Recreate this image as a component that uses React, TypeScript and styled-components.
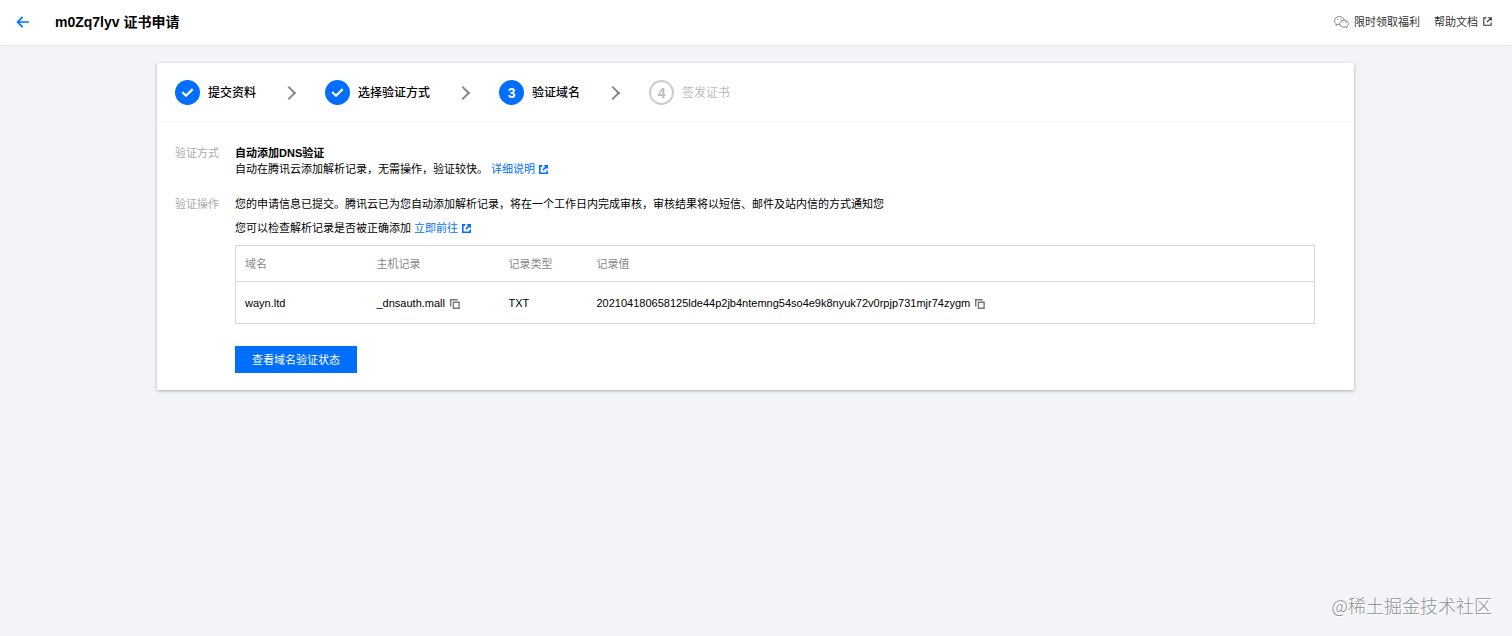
import React from 'react';
import styled, { createGlobalStyle } from 'styled-components';

const GlobalStyle = createGlobalStyle`
  * { box-sizing: border-box; }
  body {
    margin: 0;
    background: #f2f4f8;
    color: #000;
    font-family: "Liberation Sans", "Noto Sans CJK SC", sans-serif;
    font-size: 11px;
    line-height: 16px;
  }
  h1, h2, p { margin: 0; }
`;

const Page = styled.div`
  display: flex;
  flex-direction: column;
  min-height: 100vh;
`;

const Header = styled.header`
  display: flex;
  align-items: center;
  height: 45px;
  padding: 0 20px 2px 16px;
  background: #fff;
  box-shadow: 0 1px 2px rgba(30, 40, 60, 0.06);
`;

const IconButton = styled.button`
  display: inline-flex;
  padding: 0;
  border: 0;
  background: none;
  color: inherit;
  cursor: pointer;
`;

const BackButton = styled(IconButton)`
  color: #006eff;
`;

const Title = styled.h1`
  margin-left: 25px;
  font-size: 14px;
  line-height: 20px;
  font-weight: 700;
`;

const HeaderLinks = styled.nav`
  display: flex;
  gap: 14px;
  margin-left: auto;
`;

const HeaderLink = styled.a`
  display: flex;
  align-items: center;
  gap: 5px;
  color: #333;
  text-decoration: none;
`;

const Card = styled.main`
  margin: 18px 158px 0 157px;
  background: #fff;
  box-shadow: 0 1px 3px rgba(40, 50, 60, 0.35);
`;

const Steps = styled.ol`
  display: flex;
  align-items: center;
  margin: 0;
  padding: 17px 18px 16px;
  border-bottom: 2px solid #f9fafb;
  list-style: none;
`;

const Step = styled.li<{ $pending?: boolean }>`
  display: flex;
  align-items: center;
  gap: 8px;
  font-size: 12px;
  line-height: 18px;
  font-weight: ${(p) => (p.$pending ? 400 : 500)};
  color: ${(p) => (p.$pending ? '#bbb' : '#000')};

  &:not(:first-child)::before {
    content: '';
    width: 8px;
    height: 8px;
    margin: 0 23px 0 28px;
    border: solid #888;
    border-width: 2px 2px 0 0;
    transform: rotate(45deg);
  }
`;

const StepMark = styled.span<{ $pending?: boolean }>`
  display: flex;
  align-items: center;
  justify-content: center;
  width: 25px;
  height: 25px;
  border: 2px solid ${(p) => (p.$pending ? '#ccc' : '#006eff')};
  border-radius: 50%;
  background: ${(p) => (p.$pending ? '#fff' : '#006eff')};
  color: ${(p) => (p.$pending ? '#bbb' : '#fff')};
  font-size: 14px;
  font-weight: 700;
`;

const Body = styled.div`
  display: flex;
  flex-direction: column;
  gap: 19px;
  padding: 22px 39px 17px 18px;
`;

const Row = styled.section`
  display: grid;
  grid-template-columns: 60px minmax(0, 1fr);
`;

const RowLabel = styled.h2`
  font-size: 11px;
  line-height: 16px;
  font-weight: 400;
  color: #aaa;
`;

const Method = styled.p`
  font-weight: 700;
`;

const Check = styled.p`
  margin: 8px 0 9px;
`;

const TextLink = styled.a`
  color: #006eff;
  text-decoration: none;

  svg {
    margin-left: 4px;
    vertical-align: -1px;
  }
`;

const Table = styled.table`
  width: 100%;
  border: 1px solid #d5d7da;
  border-collapse: collapse;
  table-layout: fixed;
  text-align: left;
`;

const Col = styled.col<{ $width?: number }>`
  width: ${(p) => (p.$width ? `${p.$width}px` : 'auto')};
`;

const Th = styled.th`
  height: 36px;
  padding: 0 9px;
  border-bottom: 1px solid #d5d7da;
  font-weight: 400;
  color: #888;
`;

const Td = styled.td`
  height: 42px;
  padding: 0 9px;
`;

const Copyable = styled.span`
  display: flex;
  align-items: center;
  gap: 5px;
  color: #000;

  button {
    margin-top: 2px;
    color: #777;
  }
`;

const PrimaryButton = styled.button`
  height: 27px;
  margin-top: 22px;
  padding: 0 17px;
  border: 0;
  background: #006eff;
  color: #fff;
  font: inherit;
  cursor: pointer;
`;

const Watermark = styled.footer`
  margin-top: auto;
  padding: 0 20px 18px;
  color: #8f9296;
  font-family: "Noto Sans CJK SC", sans-serif;
  font-size: 18px;
  line-height: 26px;
  font-weight: 300;
  text-align: right;
  text-shadow: 1px 1px 0 #fff;
`;

const ExternalIcon = ({ size = 9, stroke = 1.6 }: { size?: number; stroke?: number }) => (
  <svg width={size} height={size} viewBox="0 0 9 9" fill="none" stroke="currentColor" strokeWidth={stroke} aria-hidden="true">
    <path d="M3.4.9H.8v7.3h7.3V5.6M5.2.8h3v3M8 1 3.9 5.1" />
  </svg>
);

const CopyIcon = () => (
  <svg width="10" height="10" viewBox="0 0 10 10" fill="none" stroke="currentColor" strokeWidth="1.4" aria-hidden="true">
    <path d="M.7 7.5V.7h7M3.4 3.2h5.7v6.1H3.4z" />
  </svg>
);

const CheckIcon = () => (
  <svg width="13" height="11" viewBox="0 0 13 11" fill="none" stroke="currentColor" strokeWidth="2.2" aria-label="已完成">
    <path d="m1.2 5 3.8 3.8 6.7-6.7" />
  </svg>
);

const BackIcon = () => (
  <svg width="14" height="12" viewBox="0 0 14 12" fill="none" stroke="currentColor" strokeWidth="1.7" aria-hidden="true">
    <path d="M6.6.8 1.6 6l5 5.2M1.8 6H13" />
  </svg>
);

const WechatIcon = () => (
  <svg width="15" height="12" viewBox="0 0 15 12" fill="none" stroke="#777" strokeWidth=".9" aria-hidden="true">
    <path d="M5.6 8.9c-.7 0-1.300-.1-1.900-.3L1.900 9.500l.4-1.600C1.100 7.100.5 6 .5 4.800.5 2.400 2.700.6 5.400.6c2.500 0 4.500 1.400 4.900 3.400" />
    <path d="M14.400 7.700c0-1.900-1.900-3.500-4.300-3.500S5.700 5.800 5.700 7.700s2 3.500 4.400 3.500c.6 0 1.100-.1 1.600-.3l1.500.8-.4-1.400c1-.6 1.600-1.600 1.600-2.600z" />
    <path d="M3.300 3.400h1M6.500 3.400h1M8.200 6.600h.9M11.100 6.600h.9" />
  </svg>
);

const steps = ['提交资料', '选择验证方式', '验证域名', '签发证书'];
const current = 2;

const records = [
  {
    domain: 'wayn.ltd',
    host: '_dnsauth.mall',
    type: 'TXT',
    value: '202104180658125lde44p2jb4ntemng54so4e9k8nyuk72v0rpjp731mjr74zygm',
  },
];

const CopyText = ({ text }: { text: string }) => (
  <Copyable>
    {text}
    <IconButton type="button" aria-label="复制">
      <CopyIcon />
    </IconButton>
  </Copyable>
);

export default function App() {
  return (
    <Page>
      <GlobalStyle />
      <Header>
        <BackButton type="button" aria-label="返回">
          <BackIcon />
        </BackButton>
        <Title>m0Zq7lyv 证书申请</Title>
        <HeaderLinks>
          <HeaderLink href="#benefits">
            <WechatIcon />
            限时领取福利
          </HeaderLink>
          <HeaderLink href="#docs">
            帮助文档
            <ExternalIcon stroke={1.1} />
          </HeaderLink>
        </HeaderLinks>
      </Header>
      <Card>
        <Steps>
          {steps.map((label, i) => (
            <Step key={label} $pending={i > current}>
              <StepMark $pending={i > current}>{i < current ? <CheckIcon /> : i + 1}</StepMark>
              {label}
            </Step>
          ))}
        </Steps>
        <Body>
          <Row>
            <RowLabel>验证方式</RowLabel>
            <div>
              <Method>自动添加DNS验证</Method>
              <p>
                自动在腾讯云添加解析记录，无需操作，验证较快。{' '}
                <TextLink href="#details">
                  详细说明
                  <ExternalIcon />
                </TextLink>
              </p>
            </div>
          </Row>
          <Row>
            <RowLabel>验证操作</RowLabel>
            <div>
              <p>您的申请信息已提交。腾讯云已为您自动添加解析记录，将在一个工作日内完成审核，审核结果将以短信、邮件及站内信的方式通知您</p>
              <Check>
                您可以检查解析记录是否被正确添加{' '}
                <TextLink href="#records">
                  立即前往
                  <ExternalIcon />
                </TextLink>
              </Check>
              <Table>
                <colgroup>
                  <Col $width={132} />
                  <Col $width={132} />
                  <Col $width={88} />
                  <Col />
                </colgroup>
                <thead>
                  <tr>
                    <Th>域名</Th>
                    <Th>主机记录</Th>
                    <Th>记录类型</Th>
                    <Th>记录值</Th>
                  </tr>
                </thead>
                <tbody>
                  {records.map((r) => (
                    <tr key={r.value}>
                      <Td>{r.domain}</Td>
                      <Td>
                        <CopyText text={r.host} />
                      </Td>
                      <Td>{r.type}</Td>
                      <Td>
                        <CopyText text={r.value} />
                      </Td>
                    </tr>
                  ))}
                </tbody>
              </Table>
              <PrimaryButton type="button">查看域名验证状态</PrimaryButton>
            </div>
          </Row>
        </Body>
      </Card>
      <Watermark>@稀土掘金技术社区</Watermark>
    </Page>
  );
}
